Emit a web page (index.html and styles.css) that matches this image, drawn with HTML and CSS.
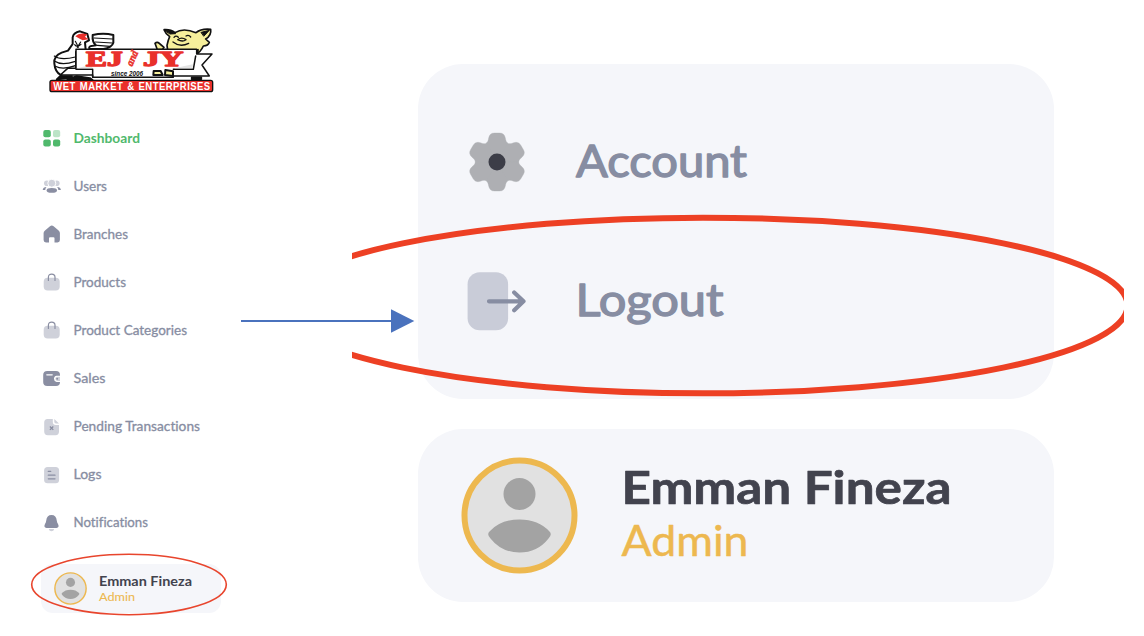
FILE: index.html
```html
<!DOCTYPE html>
<html lang="en">
<head>
<meta charset="utf-8">
<title>EJ and JY Wet Market - Logout</title>
<link rel="stylesheet" href="styles.css">
</head>
<body>
<div class="page">
  <aside class="sidebar">
    <svg class="logo" viewBox="0 0 555 240">
      <g stroke="#111" stroke-width="6" stroke-linejoin="round" stroke-linecap="round">
        <path fill="#fff" d="M158 45Q190 38 220 45L220 68Q216 82 190 87H148Q145 78 158 77L168 76Q156 66 158 45Z"/>
        <path fill="none" stroke-width="3.5" d="M162 54L218 57M166 66L217 69M172 76L210 79"/>
        <path fill="#fff" d="M98 52Q100 38 120 34L142 42 147 61 135 67 137 90 108 96V145L62 165Q45 155 43 130Q41 107 65 98L84 92 98 72Z"/>
        <path fill="none" stroke-width="3.5" d="M43 108Q62 122 106 111M43 123Q64 138 106 124M46 139Q68 151 106 137M106 64Q112 75 115 82M122 66L112 82M104 74Q111 84 123 73"/>
        <path fill="#f6ef9b" stroke-width="5" d="M384 98L381 76Q385 58 389 50Q376 40 372 29Q391 27 405 38Q430 22 468 38Q484 25 512 28Q515 46 497 57L508 67Q505 78 490 78Q482 96 468 103Z"/>
        <path fill="#111" stroke-width="3" d="M374 31L397 34 407 41 391 42ZM484 37L508 31 492 48ZM384 90Q430 100 475 88L474 104H384Z"/>
        <path fill="#f6ef9b" stroke-width="5" d="M345 70Q352 63 360 72L372 82 367 89H352Z"/>
        <path fill="none" stroke-width="4" d="M402 52Q408 45 415 52M438 48Q446 43 452 51M399 66Q420 83 446 70M413 59Q425 50 438 59Q428 67 413 59Z"/>
        <path fill="#fff" stroke-width="4.5" d="M108 88H470V102H516L486 135 508 168H400V172H158V165H61L83 145H108Z"/>
        <path fill="none" stroke-width="4.5" d="M108 148H158V172M400 148H460L467 108"/>
        <path fill="#111" stroke-width="5" d="M50 178L60 168H96L77 176ZM82 178L110 168 150 174 158 180ZM455 172H484V178H455Z"/>
        <path fill="#f6ef9b" stroke-width="6" d="M341 153H362L368 165H340ZM376 150L399 154V168L375 165Z"/>
      </g>
      <path fill="#e4e4e4" d="M112 145L157 133V145ZM403 145L458 133V145Z"/>
      <path fill="#e9302b" d="M106 49Q118 36 142 43L135 50 145 58 128 61 119 56Z"/>
      <text class="logo-name" x="138" y="137" textLength="110" lengthAdjust="spacingAndGlyphs">EJ</text>
      <text class="logo-name" x="309" y="137" textLength="121" lengthAdjust="spacingAndGlyphs">JY</text>
      <text class="logo-and" transform="translate(277 140) rotate(-67)" textLength="47" lengthAdjust="spacingAndGlyphs">and</text>
      <text class="logo-since" x="213" y="169" textLength="96" lengthAdjust="spacingAndGlyphs">since 2006</text>
      <rect x="30" y="181" width="488" height="34" rx="6" fill="#e9302b" stroke="#111" stroke-width="4"/>
      <text class="logo-tag" x="40" y="209" textLength="472" lengthAdjust="spacingAndGlyphs">WET MARKET &amp; ENTERPRISES</text>
    </svg>

    <nav class="menu">
      <a class="item active">
        <svg class="icon" viewBox="0 0 18 18"><g fill="#50b96c"><rect x="0.3" y="1" width="7.5" height="7.2" rx="2"/><rect x="0.3" y="10.6" width="7.5" height="7" rx="2"/><rect x="10" y="10.6" width="7.2" height="7" rx="2"/><rect x="10" y="1" width="7.2" height="7.2" rx="2" opacity=".38"/></g></svg>
        <svg class="label"><text x="0.5" y="14.5" textLength="66.5" lengthAdjust="spacingAndGlyphs">Dashboard</text></svg>
      </a>
      <a class="item">
        <svg class="icon" viewBox="0 0 18 18"><g fill="#cfd1da"><circle cx="3.8" cy="6.2" r="2.8"/><circle cx="13.8" cy="6.2" r="2.8"/><circle cx="8.8" cy="6.2" r="4" stroke="#fff" stroke-width="1"/></g><g fill="#8a8ea2"><path d="M3.5 10.1Q0 10.2-.3 13H2.2Q2.5 11.3 3.5 10.1ZM14.1 10.1Q17.6 10.2 17.9 13H15.4Q15.1 11.3 14.1 10.1Z"/><ellipse cx="8.8" cy="13.4" rx="5.2" ry="2.4"/></g></svg>
        <svg class="label"><text x="0.5" y="14.5" textLength="33.5" lengthAdjust="spacingAndGlyphs">Users</text></svg>
      </a>
      <a class="item">
        <svg class="icon" viewBox="0 0 18 18"><path fill="#8a8ea2" d="M.6 8Q.6 6.4 2 5.4L7 1.2Q8.8-.1 10.6 1.2L15.6 5.4Q16.9 6.4 16.9 8V15Q16.9 17.4 14.5 17.4H11.5V13.3Q11.5 12.3 10.5 12.3H7Q6 12.3 6 13.3V17.4H3Q.6 17.4.6 15Z"/></svg>
        <svg class="label"><text x="0.5" y="14.5" textLength="54.5" lengthAdjust="spacingAndGlyphs">Branches</text></svg>
      </a>
      <a class="item">
        <svg class="icon" viewBox="0 0 18 18"><rect x=".7" y="4.8" width="16" height="12.8" rx="4" fill="#cfd1da"/><path d="M5.4 7.4V4.2Q5.4 1.1 8.7 1.1T12 4.2V7.4" fill="none" stroke="#8a8ea2" stroke-width="1.2" stroke-linecap="round"/></svg>
        <svg class="label"><text x="0.5" y="14.5" textLength="52.5" lengthAdjust="spacingAndGlyphs">Products</text></svg>
      </a>
      <a class="item">
        <svg class="icon" viewBox="0 0 18 18"><rect x=".7" y="4.8" width="16" height="12.8" rx="4" fill="#cfd1da"/><path d="M5.4 7.4V4.2Q5.4 1.1 8.7 1.1T12 4.2V7.4" fill="none" stroke="#8a8ea2" stroke-width="1.2" stroke-linecap="round"/></svg>
        <svg class="label"><text x="0.5" y="14.5" textLength="113.5" lengthAdjust="spacingAndGlyphs">Product Categories</text></svg>
      </a>
      <a class="item">
        <svg class="icon" viewBox="0 0 18 18"><rect x=".2" y="1.1" width="16.8" height="15" rx="4" fill="#8a8ea2"/><path d="M3.8 4.8H9.2" stroke="#fff" stroke-width="1.3" stroke-linecap="round"/><path fill="#fff" d="M17.2 5.7H13.6A3.2 3.2 0 0 0 13.6 12H17.2Z"/><path fill="#cfd1da" d="M17 6.8H14A2.1 2.1 0 0 0 14 10.9H17Z"/><circle cx="14.2" cy="8.8" r="1" fill="#8a8ea2"/></svg>
        <svg class="label"><text x="0.5" y="14" textLength="32" lengthAdjust="spacingAndGlyphs">Sales</text></svg>
      </a>
      <a class="item">
        <svg class="icon" viewBox="0 0 18 18"><path fill="#cfd1da" d="M4.5 1H9.8V4Q9.8 7 12.8 7H16V13.5Q16 17.2 12.5 17.2H4.8Q1.2 17.2 1.2 13.5V4.5Q1.2 1 4.5 1ZM11.3 1L16 5.4H13Q11.3 5.4 11.3 3.7Z"/><path d="M6.9 8.5L10.3 11.9M10.3 8.5L6.9 11.9" stroke="#8a8ea2" stroke-width="1.3"/></svg>
        <svg class="label"><text x="0.5" y="14" textLength="126.5" lengthAdjust="spacingAndGlyphs">Pending Transactions</text></svg>
      </a>
      <a class="item">
        <svg class="icon" viewBox="0 0 18 18"><rect x="1.1" y="1" width="15" height="16.2" rx="3.5" fill="#cfd1da"/><path d="M5.3 5.4H7.7M5.3 9.2H12M5.3 12.8H12" stroke="#8a8ea2" stroke-width="1.3" stroke-linecap="round"/></svg>
        <svg class="label"><text x="0.5" y="14" textLength="28" lengthAdjust="spacingAndGlyphs">Logs</text></svg>
      </a>
      <a class="item">
        <svg class="icon" viewBox="0 0 18 18"><path fill="#8a8ea2" d="M8.5 1Q13.3 1 13.8 6.7Q14 8.4 15 10Q16.7 13.3 13.5 14H3.5Q.3 13.3 2 10Q3 8.4 3.2 6.7Q3.7 1 8.5 1Z"/><path fill="#cfd1da" d="M5.8 15H11.2Q10.7 17.3 8.5 17.3T5.8 15Z"/></svg>
        <svg class="label"><text x="0.5" y="14" textLength="74.5" lengthAdjust="spacingAndGlyphs">Notifications</text></svg>
      </a>
    </nav>

    <div class="user-card">
      <svg class="avatar" viewBox="0 0 116 116"><circle cx="58" cy="58" r="55" fill="#e1e1e1" stroke="#edb84f" stroke-width="5"/><circle cx="58" cy="36.5" r="16" fill="#a3a3a3"/><path fill="#a3a3a3" d="M28 74Q39 62 58 62T88 74Q91 77 87 81Q76 95 58 95T29 81Q25 77 28 74Z"/></svg>
      <svg class="user-text">
        <text class="user-name" x="0" y="15.5" textLength="93" lengthAdjust="spacingAndGlyphs">Emman Fineza</text>
        <text class="user-role" x="0" y="30.5" textLength="36" lengthAdjust="spacingAndGlyphs">Admin</text>
      </svg>
    </div>
  </aside>

  <main class="detail">
    <section class="popup">
      <div class="option">
        <svg class="gear" viewBox="-90 -90 180 180">
          <defs><path id="lobe" d="M0 0L-33 -56C-29 -58 -26 -64 -25 -72Q-22 -87 -8 -87H8Q22 -87 25 -72C26 -64 29 -58 33 -56Z"/></defs>
          <g fill="#aeafb3" stroke="#aeafb3" stroke-width="1"><circle r="62"/><use href="#lobe"/><use href="#lobe" transform="rotate(60)"/><use href="#lobe" transform="rotate(120)"/><use href="#lobe" transform="rotate(180)"/><use href="#lobe" transform="rotate(240)"/><use href="#lobe" transform="rotate(300)"/></g>
          <circle r="25.5" fill="#3c3d47"/>
        </svg>
        <svg class="option-text"><text x="1" y="45" textLength="171" lengthAdjust="spacingAndGlyphs">Account</text></svg>
      </div>
      <div class="option">
        <svg class="exit" viewBox="0 0 60 60"><rect x="0.6" y="1.3" width="40.5" height="58" rx="12" fill="#c9ccd8"/><path d="M22 30.3H55.5M47.2 21.5L56.5 30.3 47.2 39.3" fill="none" stroke="#878da2" stroke-width="4.2" stroke-linecap="round" stroke-linejoin="round"/></svg>
        <svg class="option-text"><text x="-0.5" y="45" textLength="148" lengthAdjust="spacingAndGlyphs">Logout</text></svg>
      </div>
    </section>
    <section class="profile">
      <svg class="avatar-large" viewBox="0 0 116 116"><circle cx="58.5" cy="58.5" r="55" fill="#e1e1e1" stroke="#edb84f" stroke-width="6"/><circle cx="58.5" cy="37" r="16" fill="#a3a3a3"/><path transform="translate(.5 .5)" fill="#a3a3a3" d="M28 74Q39 62 58 62T88 74Q91 77 87 81Q76 95 58 95T29 81Q25 77 28 74Z"/></svg>
      <svg class="profile-text">
        <text class="profile-name" x="-0.5" y="46.5" textLength="330" lengthAdjust="spacingAndGlyphs">Emman Fineza</text>
        <text class="profile-role" x="-0.5" y="98.5" textLength="127" lengthAdjust="spacingAndGlyphs">Admin</text>
      </svg>
    </section>
  </main>

  <svg class="annotations" viewBox="0 0 1144 636">
    <defs><clipPath id="frame"><rect x="352" y="200" width="772" height="210"/></clipPath></defs>
    <ellipse cx="129" cy="584.5" rx="97.3" ry="30.2" stroke="#e8452d" stroke-width="1.6"/>
    <ellipse cx="703" cy="305.5" rx="424.5" ry="87.8" stroke="#ed4024" stroke-width="6" clip-path="url(#frame)"/>
    <path d="M241 321H392" stroke="#4a72bd" stroke-width="2"/>
    <path d="M391 309.3L414.3 321 391 332.7Z" fill="#4a72bd"/>
  </svg>
</div>
</body>
</html>
```
FILE: styles.css
```css
* { box-sizing: border-box; }
body { margin: 0; background: #fff; font-family: Lato, "Open Sans", sans-serif; font-variant-ligatures: none; }
svg { display: block; flex: none; overflow: visible; }
text { stroke-linejoin: round; }

.page { position: relative; display: flex; width: 1144px; height: 636px; overflow: hidden; }

.sidebar { width: 241px; padding: 20px 20px 0 40px; }
.logo { width: 185px; height: 80px; }
.logo-name { font: 700 62px "Liberation Serif", serif; fill: #e9302b; stroke: #e9302b; stroke-width: 4; }
.logo-and { font: italic 700 32px "Liberation Serif", serif; fill: #e9302b; stroke: #e9302b; stroke-width: 1.5; }
.logo-since { font: italic 700 20px "Liberation Sans", sans-serif; fill: #111; }
.logo-tag { font: 700 32px "Liberation Sans", sans-serif; fill: #fff; word-spacing: 3px; letter-spacing: 1.5px; }

.menu { padding: 14px 0 0 2.7px; }
.item { display: flex; align-items: center; gap: 12.3px; height: 48.12px; }
.icon { width: 18px; height: 18px; }
.label { width: 130px; height: 20px; }
.label text { font-size: 13px; fill: #878da2; stroke: #878da2; stroke-width: 0.3; }
.active .label text { fill: #50b96c; stroke: #50b96c; font-weight: 700; stroke-width: 0; }

.user-card { display: flex; gap: 12px; width: 180px; height: 49px; margin: 17px 0 0 1px; padding: 8px 12.5px; border-radius: 12px; background: #f5f6fa; }
.avatar { width: 33px; height: 33px; }
.user-text { width: 96px; height: 34px; margin-top: -2px; }
.user-name { font-size: 13px; font-weight: 700; fill: #42434e; }
.user-role { font-size: 12px; fill: #edb84f; stroke: #edb84f; stroke-width: 0.1; }

.detail { display: flex; flex-direction: column; gap: 30px; padding: 64px 0 0 177.4px; }
.popup { display: flex; flex-direction: column; gap: 79px; width: 636px; height: 335px; padding: 68px 49px; border-radius: 45px; background: #f5f6fa; }
.option { display: flex; align-items: center; gap: 49px; height: 60px; }
.gear, .exit { width: 60px; height: 60px; }
.gear { margin-left: -0.5px; margin-right: -0.5px; }
.option-text { width: 180px; height: 60px; }
.option-text text { font-size: 45px; fill: #878da2; stroke: #878da2; stroke-width: 1.4; }

.profile { display: flex; gap: 45px; width: 636px; height: 172.5px; padding: 28px 43px; border-radius: 45px; background: #f5f6fa; }
.avatar-large { width: 116px; height: 116px; }
.profile-text { width: 335px; height: 116px; }
.profile-name { font-size: 46px; font-weight: 700; fill: #42434e; stroke: #42434e; stroke-width: 0.7; }
.profile-role { font-size: 43px; fill: #edb84f; stroke: #edb84f; stroke-width: 0.5; }

.annotations { position: absolute; inset: 0; width: 1144px; height: 636px; fill: none; }
```
